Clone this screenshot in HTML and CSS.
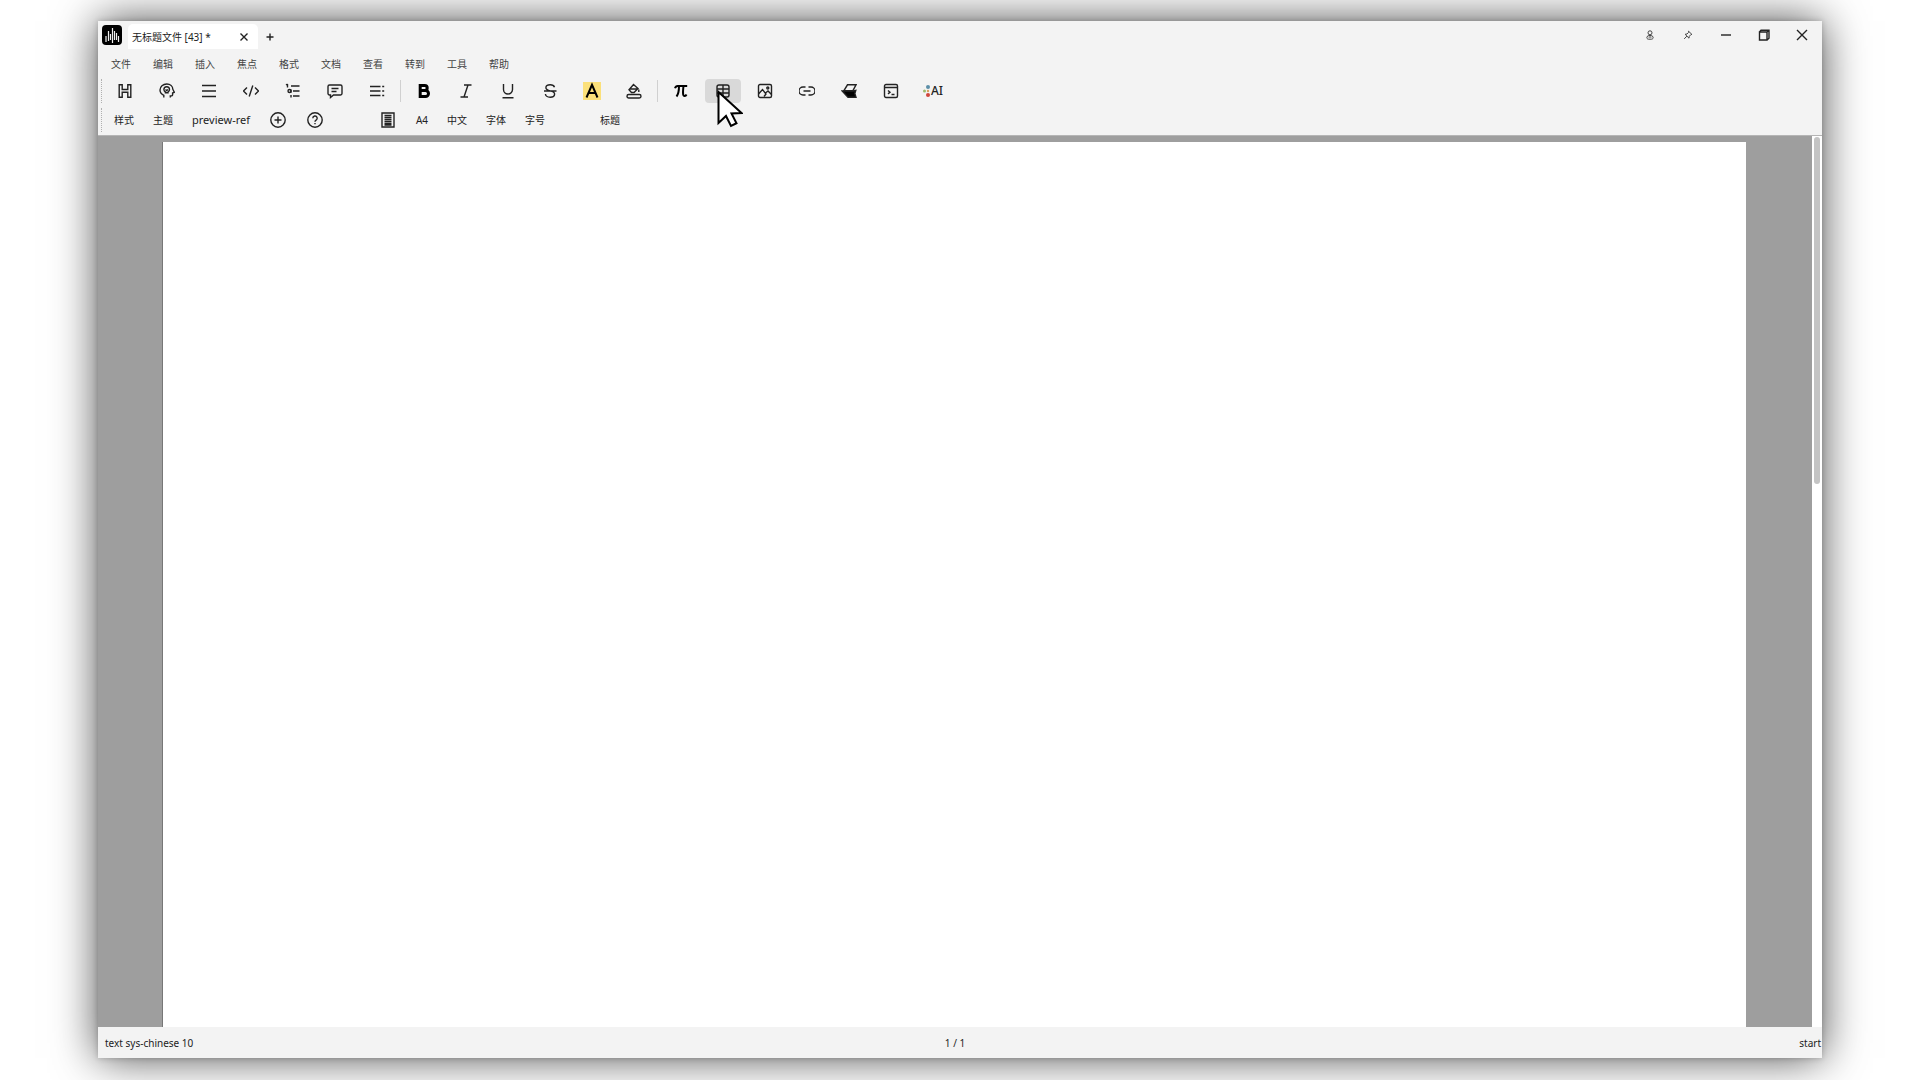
FILE: index.html
```html
<!DOCTYPE html>
<html lang="zh-CN">
  <head>
    <meta charset="UTF-8" />
    <meta name="viewport" content="width=device-width, initial-scale=1.0" />
    <title>无标题文件 [43] *</title>
    <link rel="stylesheet" href="styles.css">
  </head>

  <body>
    <div class="window">
      <header class="header">
        <div class="titlebar">
          <svg class="logo" viewBox="0 0 20 20">
            <rect width="20" height="20" rx="4" fill="#000" />
            <path d="M4 11v6M6.500 6v10M8.500 9v6M10.500 3v15M12.500 6v9M14.500 8v7M16.500 11v6" stroke="#f0f0f0" stroke-width="1.200" />
          </svg>
          <div class="tab">
            <span class="tab__name">无标题文件 [43] *</span>
            <button class="tab__close" aria-label="关闭标签">
              <svg viewBox="0 0 10 10"><path d="M1.500 1.500l7 7M8.500 1.500l-7 7" /></svg>
            </button>
          </div>
          <button class="tab__add" aria-label="新建标签">
            <svg viewBox="0 0 10 10"><path d="M5 1.500v7M1.500 5h7" /></svg>
          </button>
          <div class="controls">
            <button aria-label="用户">
              <svg class="small" viewBox="0 0 10 10"><circle cx="5" cy="2.800" r="2" /><path d="M3.500 5.500h3l1.500 1.200c.5 1.500-.3 2.500-1.500 2.500h-3c-1.200 0-2-1-1.500-2.500zM3.500 7h3" /></svg>
            </button>
            <button aria-label="置顶">
              <svg class="small" viewBox="0 0 10 10"><path d="M5.500 1.200l3.400 3.200-1 .2-1.600 1.700-.3 1.900-3.900-3.900 1.900-.3 1.600-1.700zM3.900 6.100l-2.700 2.800" /></svg>
            </button>
            <button aria-label="最小化">
              <svg viewBox="0 0 12 12"><path d="M1 6h10" /></svg>
            </button>
            <button aria-label="还原">
              <svg viewBox="0 0 12 12"><path d="M1.500 3h7.500v8h-7.500zM1.500 3l1.500-1.800h8v8l-2 1.800M9 3l2-1.800" /></svg>
            </button>
            <button aria-label="关闭">
              <svg viewBox="0 0 12 12"><path d="M1 1l10 10M11 1l-10 10" /></svg>
            </button>
          </div>
        </div>

        <nav class="menu">
          <button>文件</button>
          <button>编辑</button>
          <button>插入</button>
          <button>焦点</button>
          <button>格式</button>
          <button>文档</button>
          <button>查看</button>
          <button>转到</button>
          <button>工具</button>
          <button>帮助</button>
        </nav>

        <div class="toolbar">
          <span class="grip"></span>
          <button class="tool" aria-label="标题">
            <svg viewBox="0 0 16 16"><path d="M2.200 1.800h3v4.700h5.600v-4.700h3v12.400h-3v-5h-5.600v5h-3z" /></svg>
          </button>
          <button class="tool" aria-label="思路">
            <svg viewBox="0 0 16 16"><path d="M4.800 14.500v-2.200C2 11 1 9 1 7c0-3.500 3-6 6.800-6 3.400 0 6 2.200 6 5.200l1.500 3-1.700.8v1.800c0 .8-.5 1.200-2.300 1.200v1.500" /><path d="M6.400 9.800V9C5.200 8.400 4.900 7.500 4.900 6.600a2.800 2.800 0 0 1 5.600 0c0 1-.4 1.800-1.500 2.400v.8zM6.500 6.500l1.200 1 1.300-1" /></svg>
          </button>
          <button class="tool" aria-label="段落">
            <svg viewBox="0 0 16 16"><path d="M1 2.500h14M1 8h14M1 13.500h14" /></svg>
          </button>
          <button class="tool" aria-label="代码">
            <svg viewBox="0 0 16 16"><path d="M4 4.500l-3.500 3.500 3.500 3.500M12 4.500l3.500 3.500-3.500 3.500M9.800 2.500l-3.600 11" /></svg>
          </button>
          <button class="tool" aria-label="编号列表">
            <svg viewBox="0 0 16 16"><path d="M6 3h8.500M8 8h6.500M8 13h6.500M2.500 1v3.500M1 2l1.500-1" /><circle cx="4.500" cy="8" r="1.500" /><path d="M6 6.500v3.200M6 12v2.500" /></svg>
          </button>
          <button class="tool" aria-label="批注">
            <svg viewBox="0 0 16 16"><path d="M2.500 2h11c.8 0 1.500.6 1.500 1.400v7.200c0 .8-.7 1.400-1.500 1.400h-7l-3 2.500v-2.500h-1c-.8 0-1.500-.6-1.500-1.400V3.400C1 2.600 1.700 2 2.500 2zM4.500 5.500h7M4.500 8.500h5" /></svg>
          </button>
          <button class="tool" aria-label="列表">
            <svg viewBox="0 0 16 16"><path d="M1 3.500h10.500M1 8h10.500M1 12.500h10.500M13.200 3.500h2M13.200 8h2M13.200 12.500h2" /></svg>
          </button>
          <span class="divider"></span>
          <button class="tool" aria-label="加粗">
            <svg viewBox="0 0 16 16"><path class="heavy" d="M4.200 2.500h4.500a2.500 2.500 0 0 1 0 5h-4.500zM4.200 7.500h5.300a3 3 0 0 1 0 6h-5.300z" /></svg>
          </button>
          <button class="tool" aria-label="斜体">
            <svg viewBox="0 0 16 16"><path d="M6 2h7.500M2.500 14h7.500M10 2l-4 12" /></svg>
          </button>
          <button class="tool" aria-label="下划线">
            <svg viewBox="0 0 16 16"><path d="M3.500 1v5.500a4.500 4.500 0 0 0 9 0V1M2.500 14.800h11" /></svg>
          </button>
          <button class="tool" aria-label="删除线">
            <svg viewBox="0 0 16 16"><path d="M12.500 4.200c-.5-1.500-2-2.400-4.300-2.400-2.600 0-4.300 1.200-4.300 3 0 4 8.700 2.200 8.700 6.200 0 1.900-1.800 3.200-4.400 3.200-2.700 0-4.500-1.200-4.800-3.200M2 8h12.500" /></svg>
          </button>
          <button class="tool" aria-label="高亮">
            <svg class="highlight" viewBox="0 0 18 18"><path class="marker" d="M0 0h18v18h-18z" /><path class="bold" d="M3.500 15.500L9 2.800l5.500 12.700M5.500 11h7" /></svg>
          </button>
          <button class="tool" aria-label="填充颜色">
            <svg viewBox="0 0 16 16"><rect x="1" y="11.500" width="14" height="3.500" rx="1.700" /><path d="M7.500 1.500l4.500 4-4 4h-2.500l-2.500-2.800zM4 6h7.500M12.800 6.500v2.500" /></svg>
          </button>
          <span class="divider"></span>
          <button class="tool" aria-label="公式">
            <svg viewBox="0 0 16 16"><path class="bold" d="M2 5.200c.5-1.700 1.300-2.300 2.700-2.300h9.500M6 3c0 4-.4 8-2.500 10.500M10.500 3c-.5 4-.8 7-.2 9 .4 1.400 2.300 1.500 3.200-.5" /></svg>
          </button>
          <button class="tool tool--active" aria-label="表格">
            <svg viewBox="0 0 16 16"><rect x="2" y="2" width="12" height="12" rx="2" /><path d="M2 6h12M2 10h12M8 2v12" /></svg>
            <svg class="cursor" viewBox="0 0 26 38"><path d="M1.500 2v31l7.500-7 5 10 5.500-2.800-5-9.700 10-.5z" /></svg>
          </button>
          <button class="tool" aria-label="图片">
            <svg viewBox="0 0 16 16"><rect x="1.500" y="1.500" width="13" height="13" rx="1.500" /><circle cx="10.800" cy="5" r="1" /><path d="M1.500 11l4-4.500 3.500 4.500-2 2.500M8.500 10l2.500-2 3.500 3.500" /></svg>
          </button>
          <button class="tool" aria-label="链接">
            <svg viewBox="0 0 16 16"><path d="M6.500 4H4a4 4 0 0 0 0 8h2.500M9.500 4H12a4 4 0 0 1 0 8H9.500M4.500 8h7" /></svg>
          </button>
          <button class="tool" aria-label="参考文献">
            <svg viewBox="0 0 16 16"><path d="M6.500 1.800h8.500l-3.200 6h-9z" /><path class="solid" d="M1.200 8h10.600l3-.5-1 3 1.200 3.800h-8z" /></svg>
          </button>
          <button class="tool" aria-label="终端">
            <svg viewBox="0 0 16 16"><rect x="1.500" y="1.500" width="13" height="13" rx="1.500" /><path d="M1.500 4.500h13M5 7.500l2 1.700-2 1.700M8.500 11.500h3" /></svg>
          </button>
          <button class="tool tool--ai">
            <svg class="dots" viewBox="0 0 8 12">
              <circle cx="5" cy="2" r="2" fill="#5b8fa8" />
              <circle cx="1.500" cy="6" r="1.500" fill="#9dbb6a" />
              <circle cx="5" cy="6" r="1.200" fill="#d9a05b" />
              <circle cx="5" cy="10" r="2" fill="#d0453a" />
            </svg>
            <span>AI</span>
          </button>
        </div>

        <div class="stylebar">
          <span class="grip"></span>
          <button>样式</button>
          <button>主题</button>
          <button class="theme">preview-ref</button>
          <button class="icon" aria-label="添加">
            <svg viewBox="0 0 16 16"><circle cx="8" cy="8" r="7.200" /><path d="M8 4.500v7M4.500 8h7" /></svg>
          </button>
          <button class="icon" aria-label="帮助">
            <svg viewBox="0 0 16 16"><circle cx="8" cy="8" r="7.200" /><path d="M5.800 6.200a2.200 2.200 0 1 1 3.300 1.900c-.8.500-1.100.8-1.100 1.600M8 11v1.300" /></svg>
          </button>
          <button class="icon group" aria-label="页面">
            <svg viewBox="0 0 16 16"><path d="M2 1h12v14h-12z" /><path d="M4.500 3.500h7M4.500 5.500h7M4.500 7.500h7M4.500 9.500h7M4.500 11.500h7M4.500 13h7" /></svg>
          </button>
          <button>A4</button>
          <button>中文</button>
          <button>字体</button>
          <button>字号</button>
          <button class="group">标题</button>
        </div>
      </header>

      <main class="workspace">
        <div class="canvas">
          <div class="paper"></div>
        </div>
        <div class="scrollbar"><div class="scrollbar__thumb"></div></div>
      </main>

      <footer class="status">
        <span class="status__left">text sys-chinese 10</span>
        <span>1 / 1</span>
        <span class="status__right">start</span>
      </footer>
    </div>
  </body>
</html>
```
FILE: styles.css
```css
* {
  margin: 0;
  padding: 0;
  box-sizing: border-box;
}

body {
  height: 100vh;
  padding: 21px 98px 22px;
  overflow: hidden;
  background: #ffffff;
  color: #222222;
  font-family: "Noto Sans", "Noto Sans CJK SC", sans-serif;
  font-size: 10px;
  line-height: 16px;
}

button {
  border: none;
  background: none;
  color: inherit;
  font: inherit;
  white-space: nowrap;
}

svg {
  display: block;
  width: 16px;
  height: 16px;
  fill: none;
  stroke: #222222;
  stroke-width: 1.4;
}

.window {
  height: 100%;
  display: flex;
  flex-direction: column;
  background: #f3f3f3;
  box-shadow: 0 0 42px rgba(0, 0, 0, 0.7), 0 0 6px rgba(0, 0, 0, 0.2);
}

.header {
  height: 115px;
  border-bottom: 1px solid #b5b5b5;
}

/* Title bar */
.titlebar {
  height: 28px;
  display: flex;
  align-items: center;
  padding: 0 1px 0 4px;
}

.logo {
  width: 20px;
  height: 20px;
  stroke: none;
}

.tab {
  align-self: flex-end;
  width: 130px;
  height: 25px;
  margin-left: 6px;
  padding: 0 9px 0 4px;
  display: flex;
  align-items: center;
  justify-content: space-between;
  border-radius: 5px 5px 0 0;
  background: #ffffff;
}

.tab svg,
.tab__add svg {
  width: 10px;
  height: 10px;
}

.tab__add {
  margin-left: 7px;
  padding-top: 3px;
}

.controls {
  display: flex;
  margin-left: auto;
  height: 28px;
}

.controls button {
  width: 38px;
  display: flex;
  align-items: center;
  justify-content: center;
}

.controls svg {
  width: 12px;
  height: 12px;
}

.controls .small {
  width: 10px;
  height: 10px;
  stroke-width: 1;
  stroke: #444444;
}

/* Menu */
.menu {
  height: 30px;
  display: flex;
  align-items: center;
  padding-left: 2px;
  color: #444444;
}

.menu button {
  width: 42px;
}

/* Toolbars */
.toolbar,
.stylebar {
  position: relative;
  display: flex;
  align-items: center;
}

.toolbar {
  height: 24px;
  gap: 6px;
  padding-left: 9px;
}

.grip {
  position: absolute;
  left: 3px;
  top: 0;
  height: 24px;
  border-left: 1px dotted #b0b0b0;
}

.tool {
  position: relative;
  width: 36px;
  height: 24px;
  display: flex;
  align-items: center;
  justify-content: center;
  border-radius: 4px;
}

.tool--active {
  background: #d9d9d9;
}

.divider {
  width: 1px;
  height: 22px;
  margin: 0 -1px;
  background: #d0d0d0;
}

.heavy {
  stroke-width: 3;
  stroke: #000000;
}

.bold {
  stroke-width: 2;
  stroke: #000000;
}

.solid {
  fill: #000000;
}

.highlight {
  width: 18px;
  height: 18px;
}

.marker {
  fill: #fbe07a;
  stroke: none;
}

.tool--ai {
  font-size: 12px;
  font-weight: 500;
}

.dots {
  width: 8px;
  height: 12px;
  stroke: none;
}

.cursor {
  position: absolute;
  left: 12px;
  top: 11px;
  z-index: 1;
  width: 26px;
  height: 38px;
  fill: #ffffff;
  stroke: #000000;
  stroke-width: 2;
}

.stylebar {
  height: 24px;
  margin-top: 5px;
  gap: 19px;
  padding-left: 16px;
}

.stylebar .theme {
  font-size: 11px;
}

.stylebar .icon {
  padding: 0 1px;
}

.stylebar .group {
  margin-left: 36px;
}

/* Document */
.workspace {
  flex: 1;
  min-height: 0;
  display: flex;
}

.canvas {
  flex: 1;
  padding: 6px 66px 0 65px;
  background: #9e9e9e;
}

.paper {
  height: 100%;
  background: #ffffff;
  box-shadow: -1px 0 0 #777777;
}

.scrollbar {
  width: 10px;
  padding: 1px 2px;
  background: #ffffff;
}

.scrollbar__thumb {
  height: 39%;
  border-radius: 3px;
  background: #c4c4c4;
}

/* last column keeps the page number centred without the scrollbar */
.status {
  height: 31px;
  display: grid;
  grid-template-columns: 1fr auto 1fr 10px;
  align-items: center;
}

.status__left {
  padding-left: 7px;
}

.status__right {
  grid-column: 3 / 5;
  padding-right: 1px;
  text-align: right;
}
```
